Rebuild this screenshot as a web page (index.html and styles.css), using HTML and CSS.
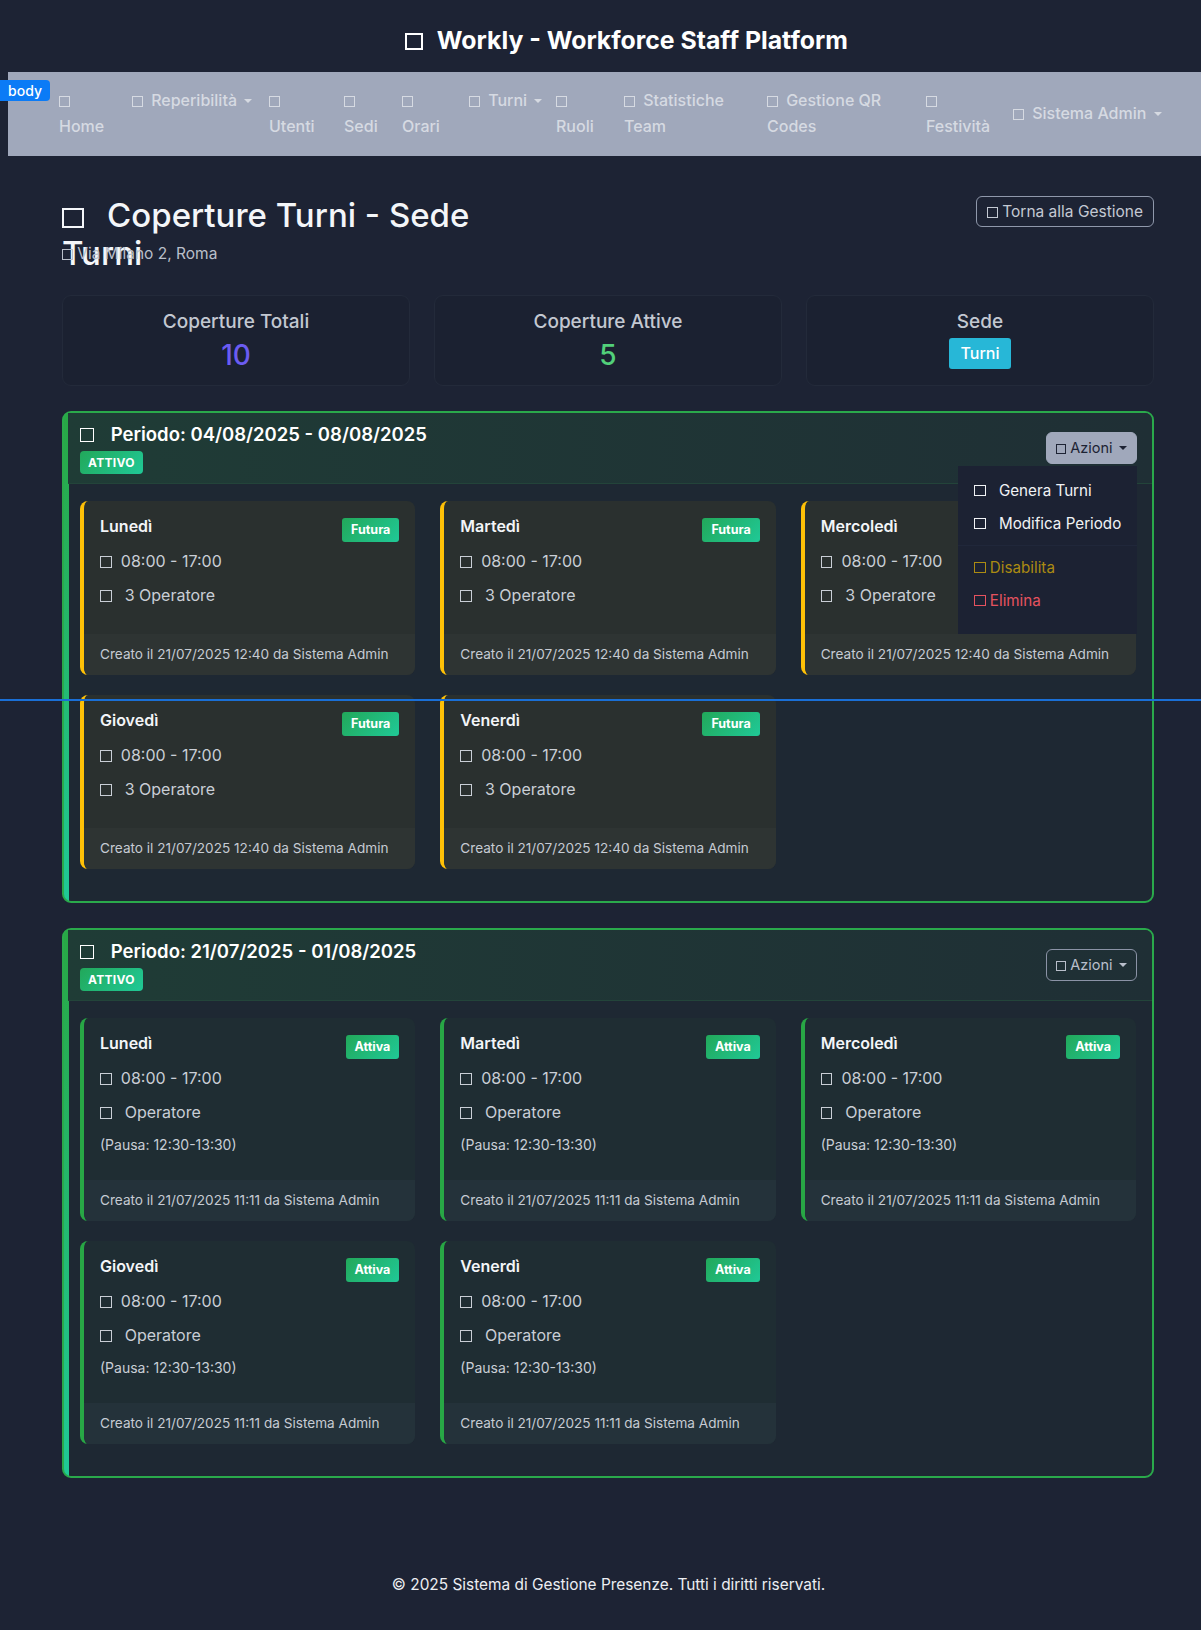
FILE: index.html
```html
<!DOCTYPE html>
<html lang="it">
<head>
<meta charset="utf-8">
<title>Coperture Turni - Sede Turni</title>
<link rel="stylesheet" href="styles.css">
</head>
<body>
<div class="dev-badge">body</div>
<div class="dev-line"></div>

<header class="app-header">
  <h1><span class="ico"></span> Workly - Workforce Staff Platform</h1>
</header>

<nav class="topnav">
  <ul class="nav-main">
    <li><a><span class="ico"></span><br>Home</a></li>
    <li><a><span class="ico"></span> Reperibilità<span class="caret"></span></a></li>
    <li><a><span class="ico"></span><br>Utenti</a></li>
    <li><a><span class="ico"></span><br>Sedi</a></li>
    <li><a><span class="ico"></span><br>Orari</a></li>
    <li><a><span class="ico"></span> Turni<span class="caret"></span></a></li>
    <li><a><span class="ico"></span><br>Ruoli</a></li>
    <li><a><span class="ico"></span> Statistiche<br>Team</a></li>
    <li><a><span class="ico"></span> Gestione QR<br>Codes</a></li>
    <li><a><span class="ico"></span><br>Festività</a></li>
    <li class="nav-admin"><a><span class="ico"></span> Sistema Admin<span class="caret"></span></a></li>
  </ul>
</nav>

<main class="container">
  <div class="page-head">
    <div class="page-head-text">
      <h2 class="page-title"><span class="ico wide"></span> Coperture Turni - Sede Turni</h2>
      <p class="page-sub"><span class="ico"></span> Via Milano 2, Roma</p>
    </div>
    <a class="btn-outline"><span class="ico"></span> Torna alla Gestione</a>
  </div>

  <section class="stats">
    <div class="stat-card">
      <div class="stat-label">Coperture Totali</div>
      <div class="stat-value purple">10</div>
    </div>
    <div class="stat-card">
      <div class="stat-label">Coperture Attive</div>
      <div class="stat-value green">5</div>
    </div>
    <div class="stat-card">
      <div class="stat-label">Sede</div>
      <div><span class="badge-info">Turni</span></div>
    </div>
  </section>

  <section class="period">
    <div class="period-head">
      <div>
        <h3 class="period-title"><span class="ico wide"></span> Periodo: 04/08/2025 - 08/08/2025</h3>
        <span class="badge-state">ATTIVO</span>
      </div>
      <div class="actions">
        <a class="btn-actions open"><span class="ico"></span> Azioni<span class="caret"></span></a>
        <ul class="menu">
          <li><span class="ico wide"></span> Genera Turni</li>
          <li><span class="ico wide"></span> Modifica Periodo</li>
          <li class="divider"></li>
          <li class="warn"><span class="ico"></span> Disabilita</li>
          <li class="danger"><span class="ico"></span> Elimina</li>
        </ul>
      </div>
    </div>
    <div class="period-body">
      <div class="day future">
        <div class="day-main">
          <div class="day-top"><span class="day-name">Lunedì</span><span class="badge-day">Futura</span></div>
          <p class="info"><span class="ico"></span> 08:00 - 17:00</p>
          <p class="info"><span class="ico wide"></span> 3 Operatore</p>
        </div>
        <div class="day-foot">Creato il 21/07/2025 12:40 da Sistema Admin</div>
      </div>
      <div class="day future">
        <div class="day-main">
          <div class="day-top"><span class="day-name">Martedì</span><span class="badge-day">Futura</span></div>
          <p class="info"><span class="ico"></span> 08:00 - 17:00</p>
          <p class="info"><span class="ico wide"></span> 3 Operatore</p>
        </div>
        <div class="day-foot">Creato il 21/07/2025 12:40 da Sistema Admin</div>
      </div>
      <div class="day future">
        <div class="day-main">
          <div class="day-top"><span class="day-name">Mercoledì</span><span class="badge-day">Futura</span></div>
          <p class="info"><span class="ico"></span> 08:00 - 17:00</p>
          <p class="info"><span class="ico wide"></span> 3 Operatore</p>
        </div>
        <div class="day-foot">Creato il 21/07/2025 12:40 da Sistema Admin</div>
      </div>
      <div class="day future">
        <div class="day-main">
          <div class="day-top"><span class="day-name">Giovedì</span><span class="badge-day">Futura</span></div>
          <p class="info"><span class="ico"></span> 08:00 - 17:00</p>
          <p class="info"><span class="ico wide"></span> 3 Operatore</p>
        </div>
        <div class="day-foot">Creato il 21/07/2025 12:40 da Sistema Admin</div>
      </div>
      <div class="day future">
        <div class="day-main">
          <div class="day-top"><span class="day-name">Venerdì</span><span class="badge-day">Futura</span></div>
          <p class="info"><span class="ico"></span> 08:00 - 17:00</p>
          <p class="info"><span class="ico wide"></span> 3 Operatore</p>
        </div>
        <div class="day-foot">Creato il 21/07/2025 12:40 da Sistema Admin</div>
      </div>
    </div>
  </section>

  <section class="period">
    <div class="period-head">
      <div>
        <h3 class="period-title"><span class="ico wide"></span> Periodo: 21/07/2025 - 01/08/2025</h3>
        <span class="badge-state">ATTIVO</span>
      </div>
      <div class="actions">
        <a class="btn-actions"><span class="ico"></span> Azioni<span class="caret"></span></a>
      </div>
    </div>
    <div class="period-body">
      <div class="day active">
        <div class="day-main">
          <div class="day-top"><span class="day-name">Lunedì</span><span class="badge-day">Attiva</span></div>
          <p class="info"><span class="ico"></span> 08:00 - 17:00</p>
          <p class="info"><span class="ico wide"></span> Operatore</p>
          <p class="pause">(Pausa: 12:30-13:30)</p>
        </div>
        <div class="day-foot">Creato il 21/07/2025 11:11 da Sistema Admin</div>
      </div>
      <div class="day active">
        <div class="day-main">
          <div class="day-top"><span class="day-name">Martedì</span><span class="badge-day">Attiva</span></div>
          <p class="info"><span class="ico"></span> 08:00 - 17:00</p>
          <p class="info"><span class="ico wide"></span> Operatore</p>
          <p class="pause">(Pausa: 12:30-13:30)</p>
        </div>
        <div class="day-foot">Creato il 21/07/2025 11:11 da Sistema Admin</div>
      </div>
      <div class="day active">
        <div class="day-main">
          <div class="day-top"><span class="day-name">Mercoledì</span><span class="badge-day">Attiva</span></div>
          <p class="info"><span class="ico"></span> 08:00 - 17:00</p>
          <p class="info"><span class="ico wide"></span> Operatore</p>
          <p class="pause">(Pausa: 12:30-13:30)</p>
        </div>
        <div class="day-foot">Creato il 21/07/2025 11:11 da Sistema Admin</div>
      </div>
      <div class="day active">
        <div class="day-main">
          <div class="day-top"><span class="day-name">Giovedì</span><span class="badge-day">Attiva</span></div>
          <p class="info"><span class="ico"></span> 08:00 - 17:00</p>
          <p class="info"><span class="ico wide"></span> Operatore</p>
          <p class="pause">(Pausa: 12:30-13:30)</p>
        </div>
        <div class="day-foot">Creato il 21/07/2025 11:11 da Sistema Admin</div>
      </div>
      <div class="day active">
        <div class="day-main">
          <div class="day-top"><span class="day-name">Venerdì</span><span class="badge-day">Attiva</span></div>
          <p class="info"><span class="ico"></span> 08:00 - 17:00</p>
          <p class="info"><span class="ico wide"></span> Operatore</p>
          <p class="pause">(Pausa: 12:30-13:30)</p>
        </div>
        <div class="day-foot">Creato il 21/07/2025 11:11 da Sistema Admin</div>
      </div>
    </div>
  </section>
</main>

<footer class="app-footer">© 2025 Sistema di Gestione Presenze. Tutti i diritti riservati.</footer>
</body>
</html>
```

FILE: styles.css
```css
html {
  overflow-x: hidden;
  background: #1d2334;
}

body {
  margin: 0;
  min-height: 1630px;
  background: #1d2334;
  color: #e9ecf1;
  font-family: Inter, "Noto Sans", "Liberation Sans", sans-serif;
  font-size: 16px;
  line-height: 1.5;
  position: relative;
}

p, h1, h2, h3, ul { margin: 0; padding: 0; }
ul { list-style: none; }
a { color: inherit; text-decoration: none; }

/* missing-glyph boxes that stand in for icon-font glyphs */
.ico {
  display: inline-block;
  box-sizing: border-box;
  width: .7em;
  height: .68em;
  border: .09em solid currentColor;
  vertical-align: -.04em;
}
.ico.wide { margin-right: .3em; }

.caret {
  display: inline-block;
  margin-left: .45em;
  vertical-align: .2em;
  border-top: .3em solid currentColor;
  border-left: .28em solid transparent;
  border-right: .28em solid transparent;
}

/* dev overlays */
.dev-badge {
  position: absolute;
  left: 0;
  top: 80px;
  width: 50px;
  height: 21px;
  background: #0b7bf6;
  color: #fff;
  font-size: 14px;
  font-weight: 500;
  line-height: 21px;
  text-align: center;
  border-radius: 0 4px 4px 0;
  z-index: 10;
}
.dev-line {
  position: absolute;
  left: 0;
  right: 0;
  top: 699px;
  height: 2px;
  background: #1a6fd6;
  z-index: 9;
}

/* header */
.app-header {
  padding: 26px 0 17px 52px;
  text-align: center;
}
.app-header h1 {
  font-size: 24.8px;
  font-weight: 700;
  line-height: 29px;
  color: #fff;
}
.app-header h1 .ico { width: .72em; height: .68em; margin-right: 8px; }

/* nav */
.topnav {
  margin-left: 8px;
  background: #a0a8bb;
  padding: 15px 0 17px 51px;
  color: #d6dae2;
  font-weight: 500;
  font-size: 16px;
  line-height: 26px;
}
.nav-main {
  display: grid;
  grid-template-columns: 73px 137px 75px 58px 67px 87px 68px 143px 159px 87px auto;
  align-items: start;
}
.nav-main .ico { width: .68em; height: .68em; border-width: 1.5px; margin-right: 4px; }
.nav-admin { align-self: center; }

/* main */
.container {
  width: 1092px;
  margin-left: 62px;
  padding-top: 40px;
}

.page-head {
  display: flex;
  justify-content: space-between;
  align-items: flex-start;
}
.page-title {
  max-width: 450px;
  height: 38px;
  font-size: 33px;
  font-weight: 500;
  line-height: 38.4px;
  color: #f4f6f9;
  margin-bottom: 8px;
}
.page-title .ico { width: .68em; height: .62em; margin-right: .42em; }
.page-sub {
  font-size: 15.5px;
  line-height: 24px;
  color: #b9bfca;
}
.btn-outline {
  display: inline-block;
  border: 1px solid #8f98ab;
  border-radius: 6px;
  padding: 3px 10px;
  font-size: 15.5px;
  line-height: 23px;
  color: #c4c9d3;
}

.stats {
  display: grid;
  grid-template-columns: repeat(3, 1fr);
  gap: 24px;
  margin-top: 29px;
}
.stat-card {
  background: #1b2131;
  border: 1px solid #232a3a;
  border-radius: 9px;
  padding: 14px 12px 13px;
  text-align: center;
}
.stat-label {
  font-size: 19px;
  font-weight: 500;
  line-height: 23px;
  color: #c3c8d1;
}
.stat-value {
  font-size: 28px;
  font-weight: 500;
  line-height: 34px;
  margin-top: 5px;
}
.purple { color: #6b5cf2; }
.green { color: #52d07a; }
.badge-info {
  display: inline-block;
  margin-top: 5px;
  background: #27b7d7;
  color: #fff;
  font-size: 16px;
  font-weight: 500;
  line-height: 31px;
  padding: 0 12px;
  border-radius: 3px;
}

/* period card */
.period {
  margin-top: 25px;
  border: 2px solid #2aa94b;
  border-radius: 9px;
  padding-left: 4px;
  background: linear-gradient(180deg, #28a745, #20c997) 0 0 / 5px 100% no-repeat, #1e2833;
}
.period-head {
  display: flex;
  justify-content: space-between;
  align-items: center;
  padding: 9px 15px 9px 12px;
  background: linear-gradient(90deg, #1f3c36, #1f2f35);
  border-bottom: 1px solid #23443a;
  border-top-right-radius: 7px;
}
.period-title {
  font-size: 18.5px;
  font-weight: 600;
  line-height: 24px;
  color: #fff;
}
.period-title .ico { width: .76em; height: .72em; margin-right: .65em; }
.badge-state {
  display: inline-block;
  margin-top: 5px;
  background: linear-gradient(135deg, #22a85a, #20c997);
  color: #fff;
  font-size: 12px;
  font-weight: 700;
  line-height: 23px;
  padding: 0 8px;
  border-radius: 4px;
  letter-spacing: .3px;
}

.actions { position: relative; }
.btn-actions {
  display: inline-block;
  border: 1px solid #8b93a6;
  border-radius: 6px;
  padding: 4px 9px;
  font-size: 14.5px;
  line-height: 22px;
  color: #b9bfcb;
}
.btn-actions.open {
  background: #a0a8bb;
  border-color: #a0a8bb;
  color: #1d2334;
}
.menu {
  position: absolute;
  right: 0;
  top: calc(100% + 2px);
  width: 179px;
  box-sizing: border-box;
  background: #1c2233;
  padding: 8px 0 17px;
  z-index: 5;
  font-size: 15.2px;
  color: #f0f2f5;
}
.menu li {
  padding: 4.5px 16px;
  line-height: 24px;
  white-space: nowrap;
}
.menu .ico { width: .76em; height: .72em; }
.menu .ico.wide { margin-right: .6em; }
.menu .divider {
  padding: 0;
  height: 1px;
  margin: 5px 0;
  background: #20273a;
}
.menu .warn { color: #ab8b12; }
.menu .danger { color: #e5525f; }

.period-body {
  display: grid;
  grid-template-columns: repeat(3, 1fr);
  column-gap: 25px;
  row-gap: 20px;
  padding: 17px 16px 32px 12px;
}

.day {
  border-radius: 8px;
  border-left: 4px solid #ffc107;
  overflow: hidden;
  display: flex;
  flex-direction: column;
}
.day.future { background: #2a302f; }
.day.active { background: #1f2d33; border-left-color: #28a745; }

.day-main {
  flex: 1;
  padding: 14px 16px 27px;
}
.day-top {
  display: flex;
  justify-content: space-between;
  align-items: flex-start;
}
.day-name {
  font-size: 16px;
  font-weight: 600;
  line-height: 22px;
  color: #f3f5f8;
}
.badge-day {
  margin-top: 3px;
  background: linear-gradient(135deg, #22a85a, #20c997);
  color: #fff;
  font-size: 12.5px;
  font-weight: 700;
  line-height: 24px;
  padding: 0 9px;
  border-radius: 3px;
}
.info {
  margin-top: 7px;
  font-size: 16px;
  line-height: 24px;
  color: #c9ced6;
}
.info + .info { margin-top: 10px; }
.info .ico { width: .74em; height: .7em; border-width: 1.5px; margin-right: .28em; }
.info .ico.wide { margin-right: .52em; }
.pause {
  margin-top: 10px;
  margin-bottom: -2px;
  font-size: 14px;
  line-height: 21px;
  color: #c9ced6;
}
.day-foot {
  padding: 10px 16px;
  font-size: 13.6px;
  line-height: 21px;
  color: #c6cbd3;
}
.day.future .day-foot { background: #2e3433; }
.day.active .day-foot { background: #24323a; }

.app-footer {
  margin-left: 16px;
  padding: 96px 0 34px;
  text-align: center;
  font-size: 15.4px;
  line-height: 22px;
  color: #eceef2;
}
```
